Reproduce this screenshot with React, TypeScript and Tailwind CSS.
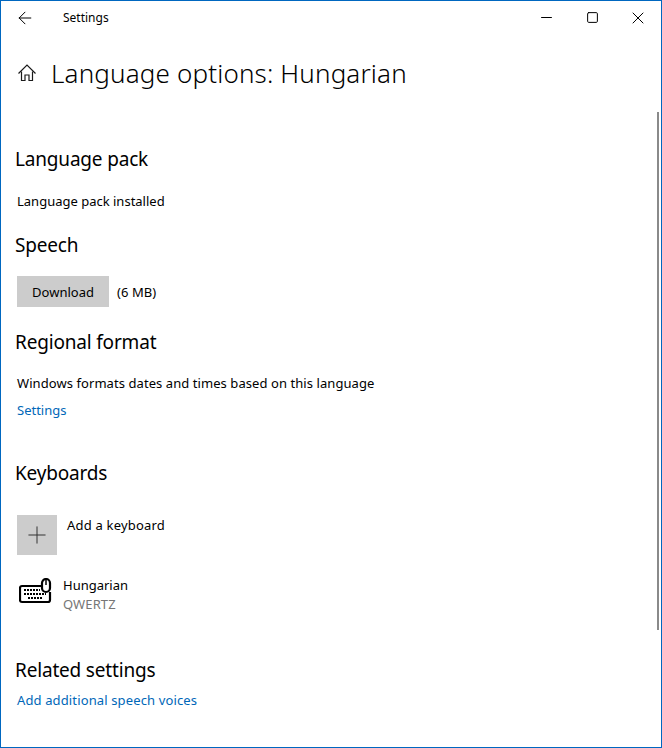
import { ArrowLeft, Minus, Plus, Square, X } from "lucide-react";

const KeyboardIcon = () => (
    <svg width="34" height="26" viewBox="0 0 34 26" fill="none" stroke="#000" strokeWidth="2.2">
        <path d="M22 8H3a2 2 0 0 0-2 2v12a2 2 0 0 0 2 2h26a2 2 0 0 0 2-2v-8" />
        <rect x="23" y="1" width="8" height="13" rx="4" />
        <path d="M27 2v5" strokeWidth="1.5" />
        <path d="M5 12h16M5 16h22M9 20h14" strokeWidth="2" strokeDasharray="2 1" />
    </svg>
)

const HomeIcon = () => (
    <svg width="18" height="18" viewBox="0 0 18 18" fill="none" stroke="#1a1a1a" strokeWidth="1.2">
        <path d="M0.5 9.5 9 1l8.500 8.500" />
        <path d="M3.500 7.500v9H7V11h4v5.500h3.500v-9" />
    </svg>
)

const Heading = ({ children, className = "" }: { children: React.ReactNode, className?: string }) => (
    <h2 className={`-ml-[1px] text-[19px] leading-[28px] tracking-[-0.18px] text-black ${className}`}>{children}</h2>
)

export default function App() {
    return (
        <div className="relative h-[748px] w-[662px] overflow-hidden border border-[#0067c0] bg-white text-[14px] text-black [font-family:'Noto_Sans',sans-serif]">
            <div className="flex h-[33px] items-center">
                <div className="flex w-[62px] pl-[14px]">
                    <ArrowLeft size={20} strokeWidth={1} absoluteStrokeWidth />
                </div>
                <span className="text-[12px]">Settings</span>
                <div className="ml-auto flex items-center pr-[13px]">
                    <Minus size={17} strokeWidth={1} absoluteStrokeWidth />
                    <div className="ml-[31px]"><Square size={13} strokeWidth={1} absoluteStrokeWidth /></div>
                    <div className="ml-[29px]"><X size={20} strokeWidth={1} absoluteStrokeWidth /></div>
                </div>
            </div>

            <div className="mt-[22px] flex h-[34px] items-center pl-[17px]">
                <HomeIcon />
                <h1 className="ml-[15px] text-[26px] leading-[34px] font-light tracking-[0.16px]">Language options: Hungarian</h1>
            </div>

            <div className="pl-[15px]">
                <Heading className="mt-[55px]">Language pack</Heading>
                <p className="mt-[18px] pl-[1px] text-[13px] leading-[20px]">Language pack installed</p>
                <Heading className="mt-[20px]">Speech</Heading>

                <div className="mt-[17px] flex items-center pl-[1px]">
                    <button className="h-[31px] w-[92px] bg-[#cccccc] pt-[2px] text-[13px]">Download</button>
                    <span className="ml-[8px] pt-[2px] text-[13px] tracking-[0.07px]">(6 MB)</span>
                </div>

                <Heading className="mt-[21px]">Regional format</Heading>
                <p className="mt-[17px] pl-[1px] text-[13px] leading-[20px] tracking-[0.07px]">Windows formats dates and times based on this language</p>
                <a className="mt-[7px] block pl-[1px] text-[13px] leading-[20px] text-[#0067b8]">Settings</a>

                <Heading className="mt-[39px]">Keyboards</Heading>
                <div className="mt-[28px] flex pl-[1px]">
                    <div className="flex h-[40px] w-[40px] items-center justify-center bg-[#cccccc]">
                        <Plus size={28} strokeWidth={1} absoluteStrokeWidth color="#333" />
                    </div>
                    <span className="ml-[10px] text-[13px] leading-[20px] tracking-[0.2px]">Add a keyboard</span>
                </div>
                <div className="mt-[21px] flex pl-[3px]">
                    <div className="mt-[2px]"><KeyboardIcon /></div>
                    <div className="ml-[10px] text-[13px] leading-[19px]">
                        <div>Hungarian</div>
                        <div className="tracking-[0.1px] text-[#767676]">QWERTZ</div>
                    </div>
                </div>

                <Heading className="mt-[42px]">Related settings</Heading>
                <a className="mt-[6px] block pl-[1px] text-[13px] leading-[20px] tracking-[0.13px] text-[#0067b8]">Add additional speech voices</a>
            </div>

            {/* scrollbar sits on top of the content */}
            <div className="absolute right-[2px] top-[111px] h-[518px] w-[2px] bg-[#8a8a8a]" />
        </div>
    )
}
